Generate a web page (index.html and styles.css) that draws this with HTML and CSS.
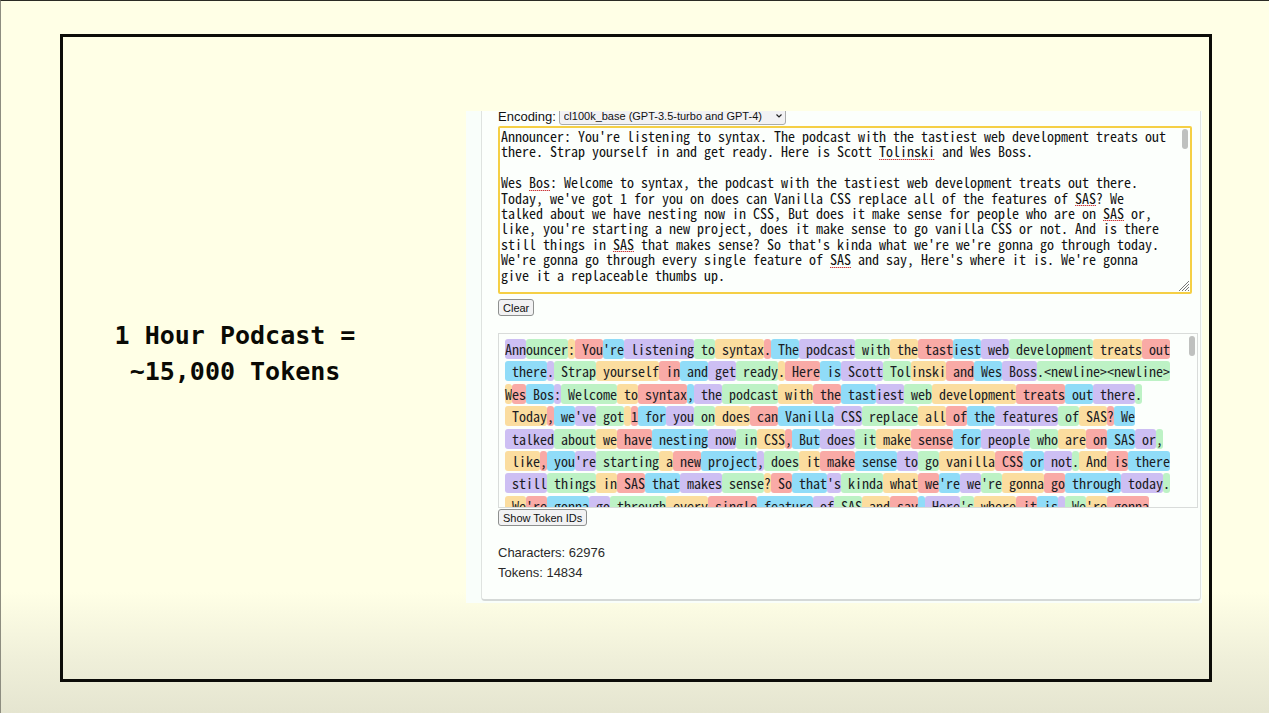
FILE: index.html
```
<!DOCTYPE html>
<html lang="en">
<head>
<meta charset="utf-8">
<title>1 Hour Podcast = ~15,000 Tokens</title>
<link rel="stylesheet" href="styles.css">
</head>
<body>
<main class="slide">
<h1 class="headline">1 Hour Podcast =<br>~15,000 Tokens</h1>
<section class="capture">
<form class="card">
<div class="encoding">
<label for="encoding">Encoding:</label>
<span class="select-wrap">
<select id="encoding"><option>cl100k_base (GPT-3.5-turbo and GPT-4)</option></select>
<svg class="chevron" viewBox="0 0 8 6" aria-hidden="true"><path d="M1.5 1.5 4 4 6.5 1.5"/></svg>
</span>
</div>
<div class="editor">
<textarea class="source" aria-label="Text to tokenize" spellcheck="false">Announcer: You're listening to syntax. The podcast with the tastiest web development treats out
there. Strap yourself in and get ready. Here is Scott Tolinski and Wes Boss.

Wes Bos: Welcome to syntax, the podcast with the tastiest web development treats out there.
Today, we've got 1 for you on does can Vanilla CSS replace all of the features of SAS? We
talked about we have nesting now in CSS, But does it make sense for people who are on SAS or,
like, you're starting a new project, does it make sense to go vanilla CSS or not. And is there
still things in SAS that makes sense? So that's kinda what we're we're gonna go through today.
We're gonna go through every single feature of SAS and say, Here's where it is. We're gonna
give it a replaceable thumbs up.</textarea>
<div class="marks" aria-hidden="true">
<i style="--row:2;--col:54;--len:8"></i>
<i style="--row:4;--col:4;--len:3"></i>
<i style="--row:5;--col:82;--len:3"></i>
<i style="--row:6;--col:86;--len:3"></i>
<i style="--row:8;--col:16;--len:3"></i>
<i style="--row:9;--col:47;--len:3"></i>
</div>
<span class="thumb"></span>
<svg class="grip" viewBox="0 0 10 10" aria-hidden="true"><path d="M0 10 10 0M3 10 10 3M6 10 10 6M9 10 10 9"/></svg>
</div>
<button class="button" type="button">Clear</button>
<div class="output">
<pre class="tokens"><span>Ann</span><span>ouncer</span><span>:</span><span> You</span><span>'re</span><span> listening</span><span> to</span><span> syntax</span><span>.</span><span> The</span><span> podcast</span><span> with</span><span> the</span><span> tast</span><span>iest</span><span> web</span><span> development</span><span> treats</span><span> out</span>
<span> there</span><span>.</span><span> Strap</span><span> yourself</span><span> in</span><span> and</span><span> get</span><span> ready</span><span>.</span><span> Here</span><span> is</span><span> Scott</span><span> Tol</span><span>inski</span><span> and</span><span> Wes</span><span> Boss</span><span>.&lt;newline&gt;&lt;newline&gt;</span>
<span>W</span><span>es</span><span> Bos</span><span>:</span><span> Welcome</span><span> to</span><span> syntax</span><span>,</span><span> the</span><span> podcast</span><span> with</span><span> the</span><span> tast</span><span>iest</span><span> web</span><span> development</span><span> treats</span><span> out</span><span> there</span><span>.</span>
<span> Today</span><span>,</span><span> we</span><span>'ve</span><span> got</span><span> </span><span>1</span><span> for</span><span> you</span><span> on</span><span> does</span><span> can</span><span> Vanilla</span><span> CSS</span><span> replace</span><span> all</span><span> of</span><span> the</span><span> features</span><span> of</span><span> SAS</span><span>?</span><span> We</span>
<span> talked</span><span> about</span><span> we</span><span> have</span><span> nesting</span><span> now</span><span> in</span><span> CSS</span><span>,</span><span> But</span><span> does</span><span> it</span><span> make</span><span> sense</span><span> for</span><span> people</span><span> who</span><span> are</span><span> on</span><span> SAS</span><span> or</span><span>,</span>
<span> like</span><span>,</span><span> you</span><span>'re</span><span> starting</span><span> a</span><span> new</span><span> project</span><span>,</span><span> does</span><span> it</span><span> make</span><span> sense</span><span> to</span><span> go</span><span> vanilla</span><span> CSS</span><span> or</span><span> not</span><span>.</span><span> And</span><span> is</span><span> there</span>
<span> still</span><span> things</span><span> in</span><span> SAS</span><span> that</span><span> makes</span><span> sense</span><span>?</span><span> So</span><span> that</span><span>'s</span><span> kinda</span><span> what</span><span> we</span><span>'re</span><span> we</span><span>'re</span><span> gonna</span><span> go</span><span> through</span><span> today</span><span>.</span>
<span> We</span><span>'re</span><span> gonna</span><span> go</span><span> through</span><span> every</span><span> single</span><span> feature</span><span> of</span><span> SAS</span><span> and</span><span> say</span><span>,</span><span> Here</span><span>'s</span><span> where</span><span> it</span><span> is</span><span>.</span><span> We</span><span>'re</span><span> gonna</span></pre>
<span class="thumb"></span>
</div>
<button class="button" type="button">Show Token IDs</button>
<p class="stats">Characters: 62976<br>Tokens: 14834</p>
</form>
</section>
</main>
</body>
</html>
```
FILE: styles.css
```
* { box-sizing: border-box; }
body {
  margin: 0;
  min-height: 100vh;
  display: flex;
  padding: 33px 57px 31px 59px;
  border-top: 1px solid #2b2b24;
  border-left: 1px solid #8d8d80;
  background: linear-gradient(#ffffe6 0, #ffffe6 83%, #f0f0da 92%, #e5e5d0 100%);
  color: #111;
  font-family: "Liberation Sans", Arial, sans-serif;
}
.slide {
  flex: 1;
  display: grid;
  grid-template-columns: minmax(0, 344fr) minmax(0, 736fr);
  column-gap: 59px;
  align-items: center;
  padding: 0 7px 2px 0;
  border: 3px solid #0c0c08;
}
.headline {
  margin: 0;
  padding-bottom: 6px;
  text-align: center;
  white-space: nowrap;
  font: bold 25px/36px "DejaVu Sans Mono", monospace;
  color: #0a0a05;
}
.capture {
  overflow: hidden;
  padding: 0 1px 2px 15px;
  background: #f9fefa;
}
.card {
  display: flex;
  flex-direction: column;
  align-items: flex-start;
  padding: 0 2px 16px 16px;
  border: 1px solid #dfe3e0;
  border-top: 0;
  border-bottom: 2px solid #d5d9d7;
  border-radius: 0 0 4px 4px;
  background: #fcfffc;
}
.encoding {
  display: flex;
  align-items: center;
  gap: 3px;
  height: 20px;
  margin-top: -5px;
  font-size: 13px;
}
.select-wrap { position: relative; }
.encoding select {
  display: block;
  height: 18px;
  padding: 0 22px 0 4px;
  appearance: none;
  border: 1px solid #aaacab;
  border-radius: 3px;
  background: #f2f2f4;
  color: #111;
  font: 11px "Liberation Sans", Arial, sans-serif;
}
.chevron {
  position: absolute;
  right: 3px;
  top: 6px;
  width: 8px;
  height: 6px;
  fill: none;
  stroke: #222;
  stroke-width: 1.2;
  pointer-events: none;
}
.editor, .tokens, .source, .marks {
  font-family: "Noto Sans Mono CJK SC", "Noto Sans Mono CJK JP", "DejaVu Sans Mono", monospace;
  font-size: 14px;
}
.editor {
  position: relative;
  align-self: stretch;
  margin-right: 6px;
  line-height: 1.1;
}
.source {
  display: block;
  width: 100%;
  height: 168px;
  padding: 1px;
  overflow: hidden;
  resize: none;
  border: 2px solid #f5cf45;
  border-radius: 2px;
  outline: 0;
  background: #fcfffc;
  color: #111;
  line-height: 1.1;
  white-space: pre;
}
.marks {
  position: absolute;
  top: 3px;
  left: 3px;
  pointer-events: none;
}
.marks i {
  position: absolute;
  top: calc(var(--row) * 1.1em - 1px);
  left: calc(var(--col) * 1ch);
  width: calc(var(--len) * 1ch);
  height: 1px;
  background: repeating-linear-gradient(90deg, #c8383c 0 1px, #eeb4b2 1px 2px);
}
.thumb {
  position: absolute;
  top: 3px;
  right: 4px;
  width: 6px;
  height: 20px;
  border-radius: 3px;
  background: #bfc1bf;
}
.grip {
  position: absolute;
  right: 3px;
  bottom: 3px;
  width: 10px;
  height: 10px;
  stroke: #777;
}
.button {
  height: 17px;
  margin: 5px 0 0;
  padding: 0 4px;
  border: 1px solid #8e908f;
  border-radius: 3px;
  background: #f2f2f3;
  color: #111;
  font: 11px "Liberation Sans", Arial, sans-serif;
}
.output {
  position: relative;
  align-self: stretch;
  height: 175px;
  margin-top: 17px;
  padding: 4px 6px;
  overflow: hidden;
  border: 1px solid #d9dcda;
}
.output + .button { margin-top: 1px; }
.output .thumb { top: 2px; right: 2px; }
.tokens {
  margin: 0;
  line-height: 1.6;
  color: #1c1c24;
}
.tokens span { border-radius: 3px; }
.tokens span:nth-child(5n + 1) { background: #cdbff3; }
.tokens span:nth-child(5n + 2) { background: #bdf2c5; }
.tokens span:nth-child(5n + 3) { background: #fbdd9f; }
.tokens span:nth-child(5n + 4) { background: #f9aaa6; }
.tokens span:nth-child(5n) { background: #90dcf8; }
.stats {
  margin: 17px 0 0;
  font-size: 13px;
  line-height: 20px;
  color: #2a2a2a;
}
```
